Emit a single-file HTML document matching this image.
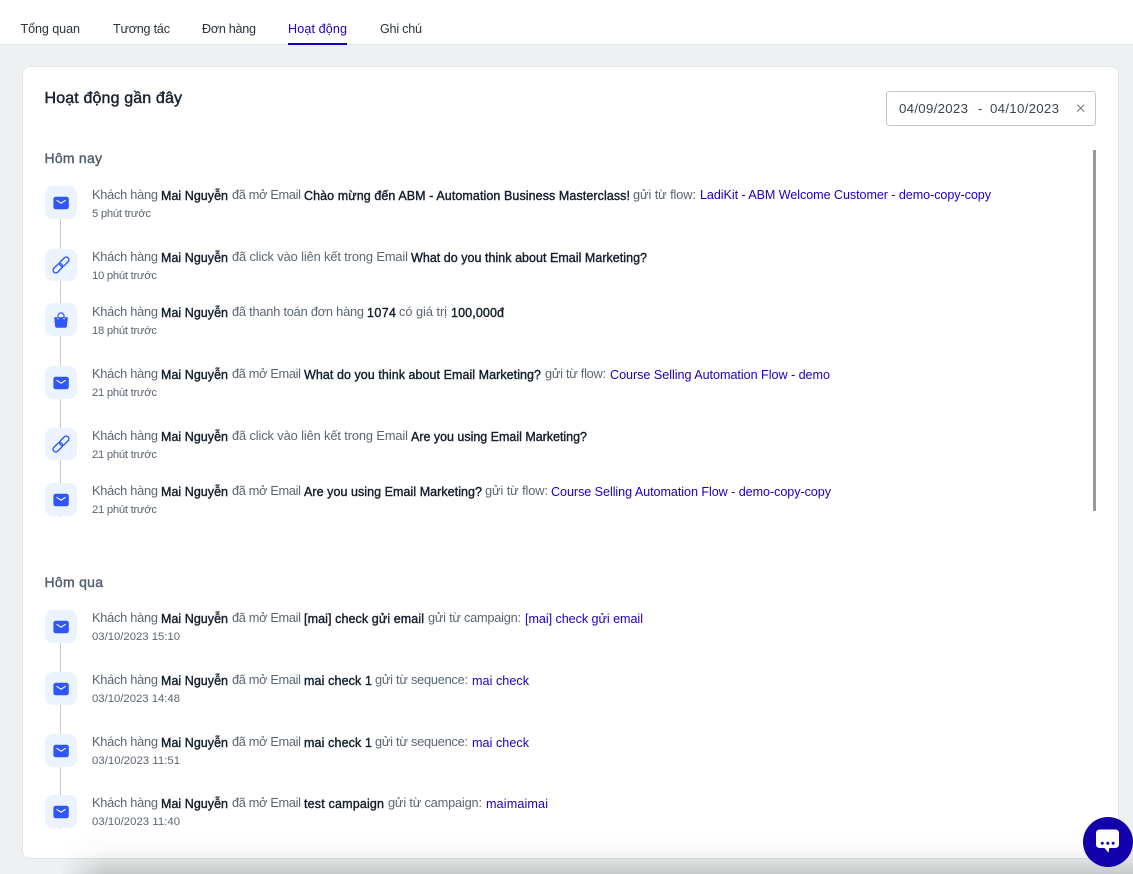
<!DOCTYPE html>
<html lang="vi"><head><meta charset="utf-8"><title>Hoạt động</title>
<style>
html,body{margin:0;padding:0;width:1133px;height:874px;overflow:hidden;background:#eef1f2}
#w{position:relative;width:1133px;height:874px;overflow:hidden;background:#eef1f2}
svg{display:block;position:absolute;left:0;top:0}
text{font-family:"Liberation Sans","DejaVu Sans",sans-serif;white-space:pre}
.t{font-size:12.6px;fill:#2b3240}
.g{font-size:12.8px;fill:#5b6573}
.b{font-size:12.5px;fill:#151e2e;stroke:#151e2e;stroke-width:.38px}
.l{font-size:12.6px;fill:#1c00c4}
.s{font-size:11.3px;fill:#5b6573}
.h{font-size:14px;fill:#525d6d;stroke:#525d6d;stroke-width:.4px}
.d{font-size:13.3px;fill:#3d4450}
#sh{position:absolute;left:60px;top:834px;width:1073px;height:40px;background:linear-gradient(to bottom,rgba(0,0,0,0) 0,rgba(0,0,0,.02) 40%,rgba(0,0,0,.07) 65%,rgba(0,0,0,.16) 100%);-webkit-mask-image:linear-gradient(to right,transparent 0,#000 45px);mask-image:linear-gradient(to right,transparent 0,#000 45px)}
</style></head><body>
<div id="w">
<div style="position:absolute;left:0;top:0;width:1133px;height:44px;background:#fff;border-bottom:1px solid #e2e5e8"></div>
<div style="position:absolute;left:22px;top:66px;width:1095px;height:791px;background:#fff;border:1px solid #e2e5e9;border-radius:8px"></div>
<div id="sh"></div>
<svg width="1133" height="874" viewBox="0 0 1133 874" xmlns="http://www.w3.org/2000/svg">
<defs>
<symbol id="mail" width="32" height="33" viewBox="0 0 32 33" overflow="visible"><rect width="32" height="33" rx="8" fill="#ebf3fe"/><rect x="8.4" y="10.8" width="15.4" height="12.5" rx="2.4" fill="#2f56fb"/><path d="M11.5 14.2l4.6 3 4.6-3" fill="none" stroke="#fff" stroke-width="1.1"/></symbol>
<symbol id="link" width="32" height="32" viewBox="0 0 32 32"><rect width="32" height="32" rx="8" fill="#ebf3fe"/><g fill="none" stroke="#2f56fb" stroke-width="1.4"><rect x="13.7" y="10.1" width="11" height="5.4" rx="2.7" transform="rotate(-45 19.2 12.8)"/><rect x="7.3" y="16.5" width="11" height="5.4" rx="2.7" transform="rotate(-45 12.8 19.2)"/></g></symbol>
<symbol id="bag" width="32" height="33" viewBox="0 0 32 33"><rect width="32" height="33" rx="8" fill="#ebf3fe"/><path d="M9.2 14.2h13.6l-.9 8.8a2 2 0 0 1-2 1.8h-7.8a2 2 0 0 1-2-1.8z" fill="#2f56fb"/><path d="M13 15.5v-2.6a3 3 0 0 1 6 0v2.6" fill="none" stroke="#2f56fb" stroke-width="1.2"/><circle cx="13" cy="15.8" r=".7" fill="#fff"/><circle cx="19" cy="15.8" r=".7" fill="#fff"/></symbol>
</defs>

<!-- tabs -->
<text class="t" x="20.5" y="33" textLength="59.5">Tổng quan</text>
<text class="t" x="113" y="33" textLength="57">Tương tác</text>
<text class="t" x="202" y="33" textLength="54">Đơn hàng</text>
<text class="l" x="288" y="33" textLength="59">Hoạt động</text>
<text class="t" x="380" y="33" textLength="42">Ghi chú</text>
<rect x="288" y="43" width="59" height="2" fill="#1400bd"/>

<!-- header -->
<text x="44.5" y="103" textLength="137.5" style="font-size:16px;fill:#1b2333;stroke:#1b2333;stroke-width:.45px">Hoạt động gần đây</text>
<rect x="886.5" y="91.5" width="209" height="34" rx="3" fill="#fff" stroke="#c3c8ce"/>
<text class="d" x="899" y="113" textLength="69">04/09/2023</text>
<text class="d" x="978" y="113">-</text>
<text class="d" x="990" y="113" textLength="69">04/10/2023</text>
<path d="M1077.2 104.7l7 7M1084.2 104.7l-7 7" stroke="#666e78" stroke-width="1"/>
<rect x="1093" y="150" width="3" height="361" fill="#999"/>

<text class="h" x="44.5" y="163" textLength="57.5">Hôm nay</text>
<text class="h" x="44.5" y="587" textLength="58.5">Hôm qua</text>

<!-- connector lines -->
<g fill="#c5c8cc">
<rect x="60" y="219" width="1" height="30"/><rect x="60" y="281" width="1" height="22"/><rect x="60" y="336" width="1" height="30"/><rect x="60" y="398" width="1" height="30"/><rect x="60" y="460" width="1" height="23"/><rect x="60" y="515" width="1" height="2"/>
<rect x="60" y="642" width="1" height="30"/><rect x="60" y="704" width="1" height="30"/><rect x="60" y="766" width="1" height="29"/><rect x="60" y="827" width="1" height="2"/>
</g>

<!-- icons -->
<use href="#mail" x="45" y="186"/><use href="#link" x="45" y="249"/><use href="#bag" x="45" y="303"/><use href="#mail" x="45" y="366"/><use href="#link" x="45" y="428"/><use href="#mail" x="45" y="483"/>
<use href="#mail" x="45" y="610"/><use href="#mail" x="45" y="672"/><use href="#mail" x="45" y="734"/><use href="#mail" x="45" y="795"/>

<!-- row 1 -->
<text class="g" x="92" y="199" textLength="66">Khách hàng</text><text class="b" x="161" y="200" textLength="67">Mai Nguyễn</text><text class="g" x="232" y="199" textLength="69">đã mở Email</text><text class="b" x="304" y="200" textLength="326">Chào mừng đến ABM - Automation Business Masterclass!</text><text class="g" x="633" y="199" textLength="63">gửi từ flow:</text><text class="l" x="700" y="199" textLength="291">LadiKit - ABM Welcome Customer - demo-copy-copy</text>
<text class="s" x="92" y="217" textLength="59">5 phút trước</text>
<!-- row 2 -->
<text class="g" x="92" y="261" textLength="66">Khách hàng</text><text class="b" x="161" y="262" textLength="67">Mai Nguyễn</text><text class="g" x="232" y="261" textLength="176">đã click vào liên kết trong Email</text><text class="b" x="411" y="262" textLength="236">What do you think about Email Marketing?</text>
<text class="s" x="92" y="279" textLength="65">10 phút trước</text>
<!-- row 3 -->
<text class="g" x="92" y="316" textLength="66">Khách hàng</text><text class="b" x="161" y="317" textLength="67">Mai Nguyễn</text><text class="g" x="232" y="316" textLength="132">đã thanh toán đơn hàng</text><text class="b" x="367" y="317" textLength="29">1074</text><text class="g" x="399" y="316" textLength="48">có giá trị</text><text class="b" x="451" y="317" textLength="53">100,000đ</text>
<text class="s" x="92" y="334" textLength="65">18 phút trước</text>
<!-- row 4 -->
<text class="g" x="92" y="378" textLength="66">Khách hàng</text><text class="b" x="161" y="379" textLength="67">Mai Nguyễn</text><text class="g" x="232" y="378" textLength="69">đã mở Email</text><text class="b" x="304" y="379" textLength="237">What do you think about Email Marketing?</text><text class="g" x="545" y="378" textLength="61">gửi từ flow:</text><text class="l" x="610" y="379" textLength="220">Course Selling Automation Flow - demo</text>
<text class="s" x="92" y="396" textLength="65">21 phút trước</text>
<!-- row 5 -->
<text class="g" x="92" y="440" textLength="66">Khách hàng</text><text class="b" x="161" y="441" textLength="67">Mai Nguyễn</text><text class="g" x="232" y="440" textLength="176">đã click vào liên kết trong Email</text><text class="b" x="411" y="441" textLength="176">Are you using Email Marketing?</text>
<text class="s" x="92" y="458" textLength="65">21 phút trước</text>
<!-- row 6 -->
<text class="g" x="92" y="495" textLength="66">Khách hàng</text><text class="b" x="161" y="496" textLength="67">Mai Nguyễn</text><text class="g" x="232" y="495" textLength="69">đã mở Email</text><text class="b" x="304" y="496" textLength="178">Are you using Email Marketing?</text><text class="g" x="485" y="495" textLength="63">gửi từ flow:</text><text class="l" x="551" y="496" textLength="280">Course Selling Automation Flow - demo-copy-copy</text>
<text class="s" x="92" y="513" textLength="65">21 phút trước</text>
<!-- row 7 -->
<text class="g" x="92" y="622" textLength="66">Khách hàng</text><text class="b" x="161" y="623" textLength="67">Mai Nguyễn</text><text class="g" x="232" y="622" textLength="69">đã mở Email</text><text class="b" x="304" y="623" textLength="120">[mai] check gửi email</text><text class="g" x="428" y="622" textLength="93">gửi từ campaign:</text><text class="l" x="525" y="623" textLength="118">[mai] check gửi email</text>
<text class="s" x="92" y="640" textLength="88">03/10/2023 15:10</text>
<!-- row 8 -->
<text class="g" x="92" y="684" textLength="66">Khách hàng</text><text class="b" x="161" y="685" textLength="67">Mai Nguyễn</text><text class="g" x="232" y="684" textLength="69">đã mở Email</text><text class="b" x="304" y="685" textLength="68">mai check 1</text><text class="g" x="375" y="684" textLength="93">gửi từ sequence:</text><text class="l" x="472" y="685" textLength="57">mai check</text>
<text class="s" x="92" y="702" textLength="88">03/10/2023 14:48</text>
<!-- row 9 -->
<text class="g" x="92" y="746" textLength="66">Khách hàng</text><text class="b" x="161" y="747" textLength="67">Mai Nguyễn</text><text class="g" x="232" y="746" textLength="69">đã mở Email</text><text class="b" x="304" y="747" textLength="68">mai check 1</text><text class="g" x="375" y="746" textLength="93">gửi từ sequence:</text><text class="l" x="472" y="747" textLength="57">mai check</text>
<text class="s" x="92" y="764" textLength="88">03/10/2023 11:51</text>
<!-- row 10 -->
<text class="g" x="92" y="807" textLength="66">Khách hàng</text><text class="b" x="161" y="808" textLength="67">Mai Nguyễn</text><text class="g" x="232" y="807" textLength="69">đã mở Email</text><text class="b" x="304" y="808" textLength="80">test campaign</text><text class="g" x="388" y="807" textLength="94">gửi từ campaign:</text><text class="l" x="486" y="808" textLength="62">maimaimai</text>
<text class="s" x="92" y="825" textLength="88">03/10/2023 11:40</text>

<!-- chat widget -->
<circle cx="1108" cy="842" r="25" fill="#1200ad"/>
<path d="M1099.5 829.5h16a3.5 3.5 0 0 1 3.5 3.5v11.5a3.5 3.5 0 0 1-3.5 3.5h-6.2l-.8 4.8-4-4.8h-5a3.5 3.5 0 0 1-3.5-3.5V833a3.5 3.5 0 0 1 3.5-3.5z" fill="#fff"/>
<circle cx="1102.3" cy="843.3" r="1.5" fill="#1200ad"/><circle cx="1107.8" cy="843.3" r="1.5" fill="#1200ad"/><circle cx="1113.2" cy="843.3" r="1.5" fill="#1200ad"/>
</svg>
</div>
</body></html>
